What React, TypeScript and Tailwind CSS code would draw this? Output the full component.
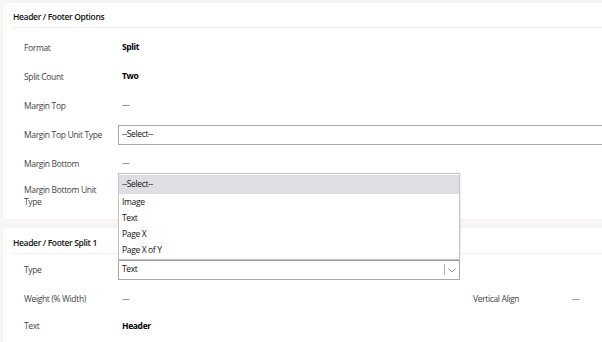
import React from "react";

const font = { fontFamily: '"Open Sans", "Noto Sans", sans-serif', letterSpacing: "-0.35px" };

function Row({ label, value, bold = true, children }: { label: React.ReactNode; value?: string; bold?: boolean; children?: React.ReactNode }) {
  return (
    <div className="flex h-[29px] items-center">
      <div className="w-[115px] pl-[21px] text-[#444] leading-[12px]">{label}</div>
      {children ? (
        children
      ) : (
        <div className={bold ? "pl-[4px] font-bold text-[#000]" : "pl-[4px] text-[#555]"}>{value}</div>
      )}
    </div>
  );
}

export default function App() {
  return (
    <div className="relative h-[342px] w-[602px] overflow-hidden bg-[#f7f6f5] text-[8.5px]" style={font}>
      <div className="pl-[3px] pt-[3px]">
        {/* Card 1 */}
        <div className="h-[216px] w-[620px] rounded-[2px] bg-white shadow-[0_0_1px_rgba(0,0,0,0.15)]">
          <div className="ml-[9px] flex h-[25px] items-end border-b border-[#eeeeee] pb-[4px] pl-[1px] font-semibold leading-[12px] text-[#111]">
            Header / Footer Options
          </div>
          <div className="pt-[5px]">
            <Row label="Format" value="Split" />
            <Row label="Split Count" value="Two" />
            <Row label="Margin Top" value="---" bold={false} />
            <Row label="Margin Top Unit Type">
              <div className="flex h-[20px] flex-1 items-center border border-[#a8a8a8] pl-[3px] text-[#111]">--Select--</div>
            </Row>
            <Row label="Margin Bottom" value="---" bold={false} />
            <div className="flex h-[29px] items-center pt-[7px]">
              <div className="w-[115px] pl-[21px] leading-[12px] text-[#444]">
                Margin Bottom Unit
                <br />
                Type
              </div>
            </div>
          </div>
        </div>
        {/* Card 2 */}
        <div className="mt-[9px] h-[130px] w-[620px] rounded-[2px] bg-white shadow-[0_0_1px_rgba(0,0,0,0.15)]">
          <div className="ml-[9px] flex h-[26px] items-end border-b border-[#eeeeee] pb-[4px] pl-[1px] font-semibold leading-[12px] text-[#111]">
            Header / Footer Split 1
          </div>
          <div className="pt-[1px]">
            <Row label="Type">
              <div className="flex h-[20px] w-[342px] items-center border border-[#a8a8a8] pl-[3px] text-[#111]">
                <span className="flex-1">Text</span>
                <span className="mr-[2px] h-[11px] w-px bg-[#b0b0b0]" />
                <svg width="10" height="10" viewBox="0 0 10 10" className="mr-[2px]">
                  <path d="M1.5 3.5 L5 7 L8.5 3.5" fill="none" stroke="#888" strokeWidth="0.9" />
                </svg>
              </div>
            </Row>
            <div className="flex h-[29px] items-center pt-[1px]">
              <div className="w-[115px] pl-[21px] text-[#444]">Weight (% Width)</div>
              <div className="w-[355px] pl-[4px] text-[#555]">---</div>
              <div className="w-[99px] text-[#444]">Vertical Align</div>
              <div className="text-[#555]">---</div>
            </div>
            <div className="flex h-[26px] items-center">
              <div className="w-[115px] pl-[21px] text-[#444]">Text</div>
              <div className="pl-[4px] font-bold text-[#000]">Header</div>
            </div>
          </div>
        </div>
      </div>

      {/* Open dropdown list */}
      <div className="absolute left-[118px] top-[173px] h-[87px] w-[342px] border border-[#c4c4c4] bg-white pt-[1px] text-[#111] shadow-[1px_1px_2px_rgba(0,0,0,0.08)]">
        <div className="flex h-[19px] items-center bg-[#dfdee4] pl-[3px]">--Select--</div>
        <div className="flex h-[16px] items-center pl-[3px]">Image</div>
        <div className="flex h-[16px] items-center pl-[3px]">Text</div>
        <div className="flex h-[16px] items-center pl-[3px]">Page X</div>
        <div className="flex h-[16px] items-center pl-[3px]">Page X of Y</div>
      </div>
    </div>
  );
}
